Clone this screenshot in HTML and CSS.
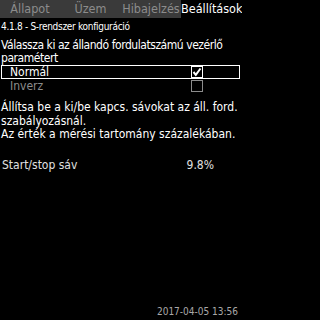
FILE: index.html
```html
<!DOCTYPE html>
<html lang="hu">
<head>
<meta charset="utf-8">
<link rel="stylesheet" href="styles.css">
</head>
<body>
<div class="screen">
  <nav class="tabs">
    <div class="tab">Állapot</div>
    <div class="tab">Üzem</div>
    <div class="tab">Hibajelzés</div>
    <div class="tab active">Beállítások</div>
  </nav>
  <div class="title">4.1.8 - S-rendszer konfiguráció</div>
  <p class="text prompt">Válassza ki az állandó fordulatszámú vezérlő<br>paramétert</p>
  <div class="options">
    <div class="option selected">
      <span>Normál</span>
      <svg class="check" width="12" height="12" viewBox="0 0 12 12"><rect x="0.5" y="0.5" width="11" height="11" fill="none" stroke="#fff"/><path d="M2.5 6 L4.8 8.8 L9.5 2.5" fill="none" stroke="#fff" stroke-width="2"/></svg>
    </div>
    <div class="option disabled">
      <span>Inverz</span>
      <svg class="check" width="12" height="12" viewBox="0 0 12 12"><rect x="0.5" y="0.5" width="11" height="11" fill="none" stroke="#8c8c8c"/></svg>
    </div>
  </div>
  <p class="text info">Állítsa be a ki/be kapcs. sávokat az áll. ford.<br>szabályozásnál.<br>Az érték a mérési tartomány százalékában.</p>
  <div class="param">
    <span>Start/stop sáv</span>
    <span class="value">9.8%</span>
  </div>
  <div class="spacer"></div>
  <div class="date">2017-04-05 13:56</div>
</div>
</body>
</html>
```
FILE: styles.css
```css
html, body {
  margin: 0;
  padding: 0;
  background: #000;
}
.screen {
  width: 242px;
  height: 320px;
  display: flex;
  flex-direction: column;
  background: #000;
  color: #fff;
  font-family: "Liberation Sans Narrow", "DejaVu Sans Condensed", "Liberation Sans", sans-serif;
  font-size: 12px;
  overflow: hidden;
}
.tabs {
  display: grid;
  grid-template-columns: 60px 61px 60px 61px;
  height: 18px;
  background: #3a3a3a;
}
.tab {
  text-align: center;
  line-height: 18px;
  color: #8c8c8c;
  font-size: 12.5px;
}
.tab.active {
  background: #000;
  color: #fff;
}
.title {
  font-size: 10px;
  line-height: 12px;
  margin: 3px 0 0 1px;
  letter-spacing: -0.3px;
  white-space: nowrap;
}
.text {
  margin: 0;
  padding-left: 1px;
  white-space: nowrap;
}
.prompt {
  margin-top: 6px;
  line-height: 13px;
  letter-spacing: -0.45px;
}
.options {
  margin: 0 2px 0 1px;
  display: flex;
  flex-direction: column;
}
.option {
  display: flex;
  justify-content: space-between;
  align-items: center;
  height: 12px;
  padding: 0 36px 0 8px;
  border: 1px solid transparent;
}
.option.selected {
  border-color: #fff;
}
.option.disabled {
  color: #8c8c8c;
}
.info {
  margin-top: 8px;
  line-height: 13.5px;
}
.param {
  display: flex;
  justify-content: space-between;
  margin-top: 16px;
  padding: 0 28px 0 2px;
  color: #e0e0e0;
  line-height: 14px;
}
.spacer {
  flex: 1;
}
.date {
  align-self: flex-end;
  font-size: 10px;
  line-height: 12px;
  color: #a8a8a8;
  margin: 0 4px 2px 0;
}
```
